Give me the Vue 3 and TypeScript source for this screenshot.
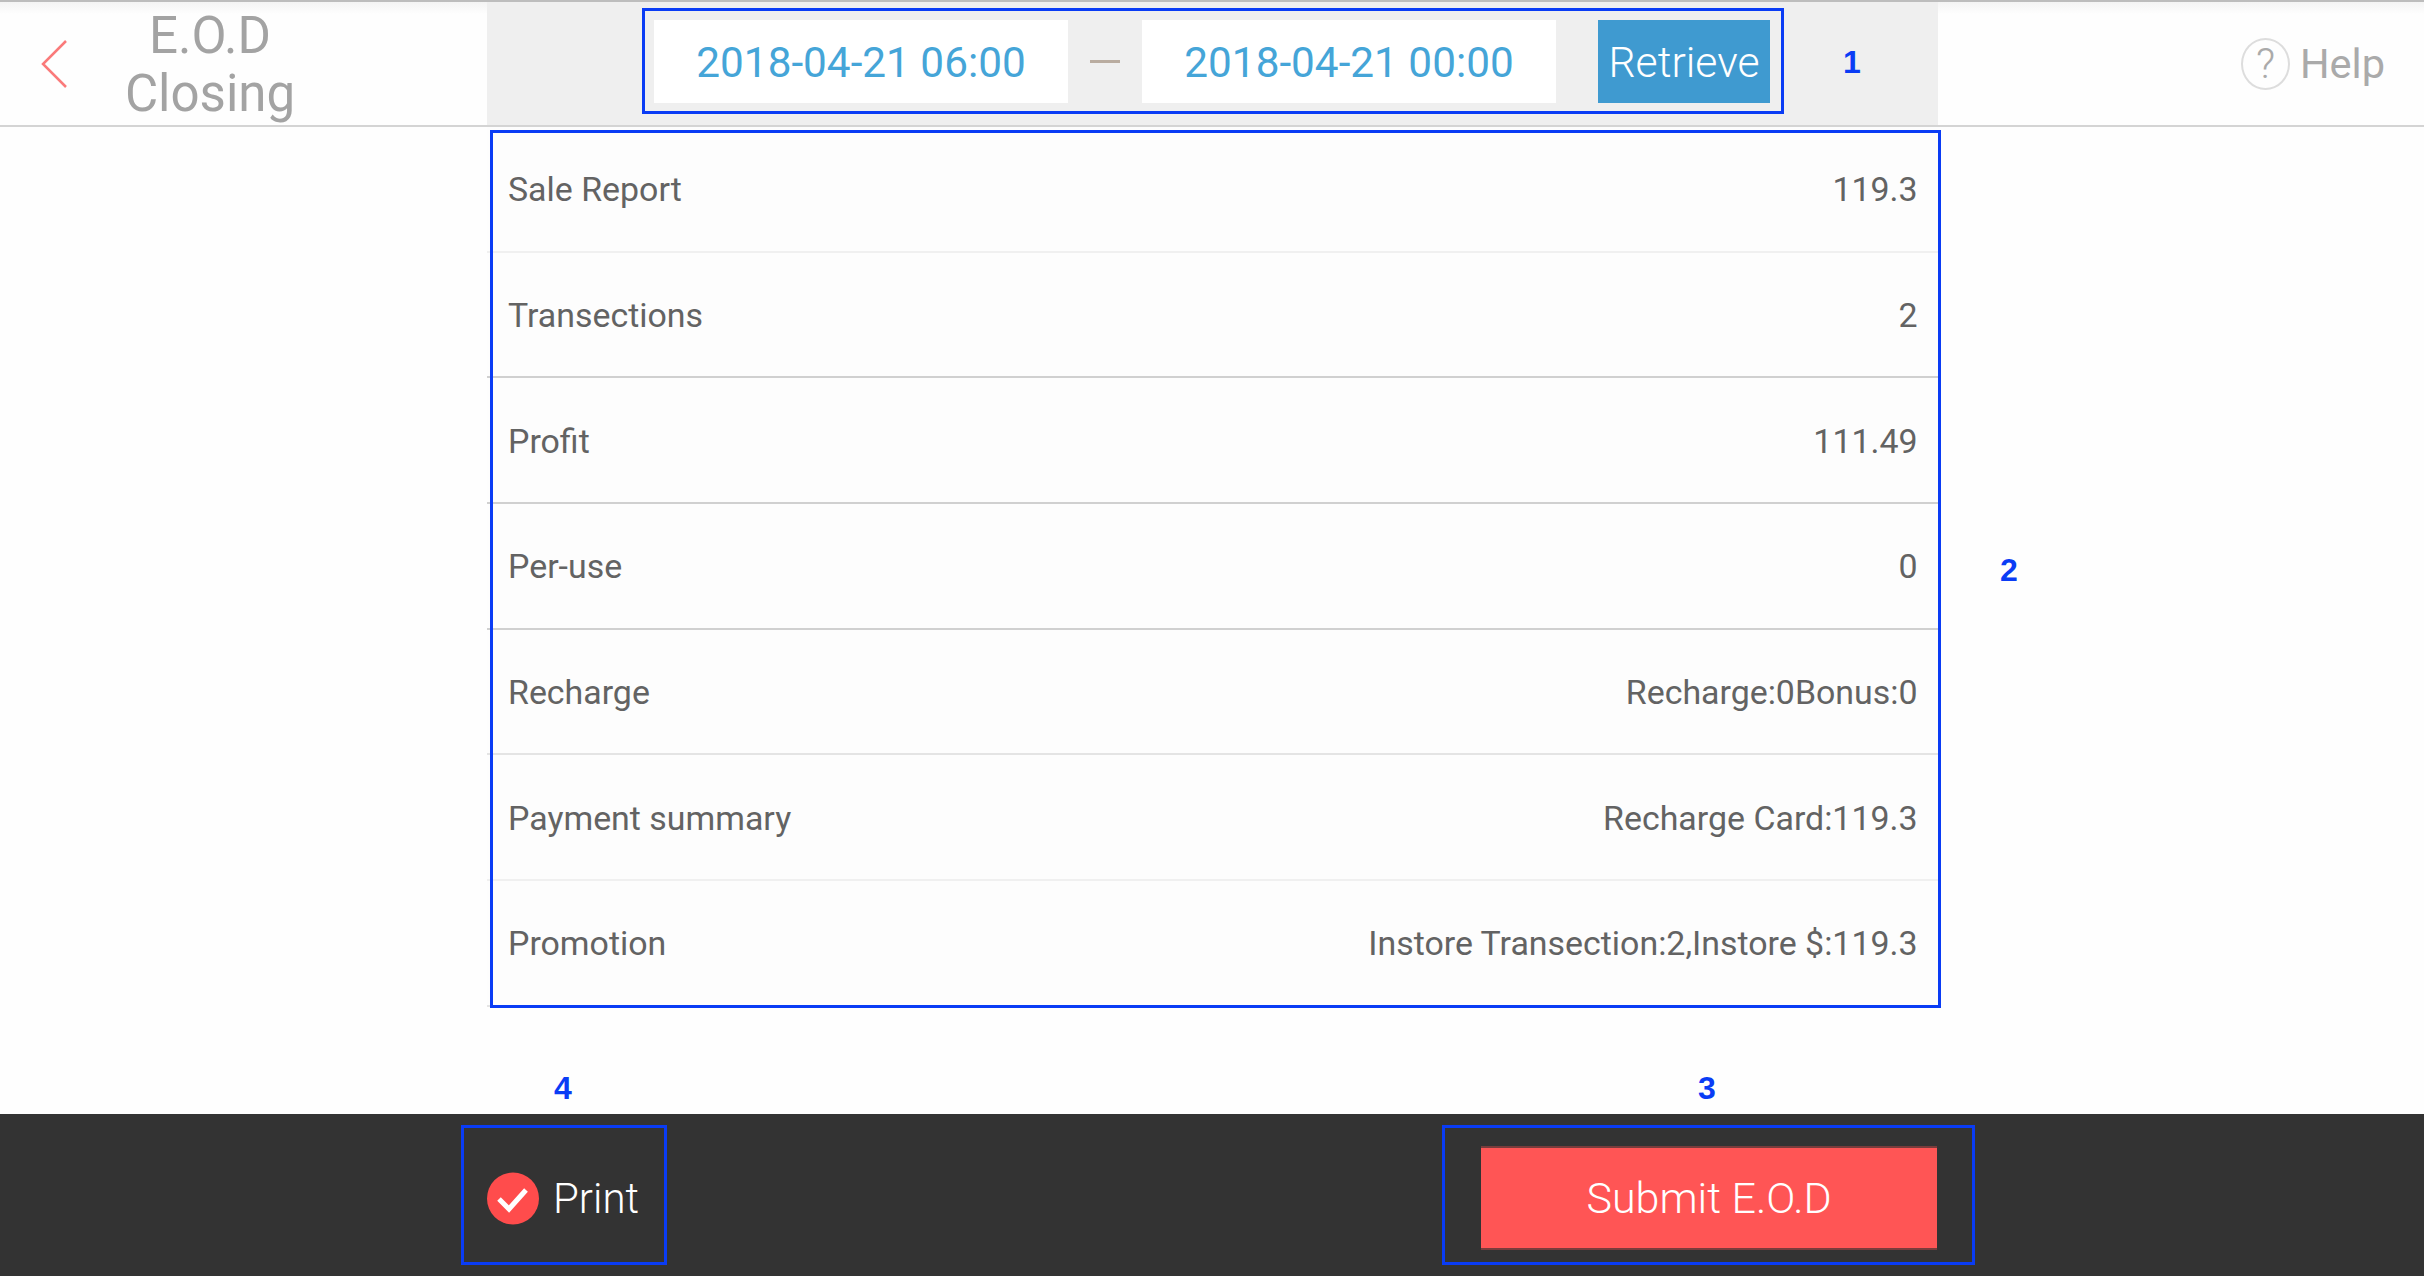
<script setup lang="ts">
interface Row { label: string; value: string }
const rows: Row[] = [
  { label: 'Sale Report', value: '119.3' },
  { label: 'Transections', value: '2' },
  { label: 'Profit', value: '111.49' },
  { label: 'Per-use', value: '0' },
  { label: 'Recharge', value: 'Recharge:0Bonus:0' },
  { label: 'Payment summary', value: 'Recharge Card:119.3' },
  { label: 'Promotion', value: 'Instore Transection:2,Instore $:119.3' },
]
</script>

<template>
  <div class="page">
    <header class="header">
      <div class="head-left">
        <svg class="back" width="30" height="50" viewBox="0 0 30 50">
          <path d="M26 2 L3 25 L26 48" fill="none" stroke="#fa7a7a" stroke-width="2.5" />
        </svg>
        <h1 class="title">E.O.D<br />Closing</h1>
      </div>
      <div class="head-mid">
        <div class="date">2018-04-21 06:00</div>
        <div class="dash"></div>
        <div class="date">2018-04-21 00:00</div>
        <button class="retrieve">Retrieve</button>
      </div>
      <div class="head-right">
        <span class="help-icon">?</span>
        <span class="help-text">Help</span>
      </div>
    </header>

    <main class="content">
      <div v-for="r in rows" :key="r.label" class="row">
        <span>{{ r.label }}</span>
        <span class="val">{{ r.value }}</span>
      </div>
    </main>

    <footer class="footer">
      <div class="print">
        <svg width="52" height="53" viewBox="0 0 52 53">
          <circle cx="26" cy="26.5" r="26" fill="#ff4c4c" />
          <path d="M12 27 L22 37 L39 18" fill="none" stroke="#fff" stroke-width="5" />
        </svg>
        <span>Print</span>
      </div>
      <button class="submit">Submit E.O.D</button>
    </footer>

    <div class="mark m1"></div>
    <div class="mark m2"></div>
    <div class="mark m3"></div>
    <div class="mark m4"></div>
    <span class="num n1">1</span>
    <span class="num n2">2</span>
    <span class="num n3">3</span>
    <span class="num n4">4</span>
  </div>
</template>

<style>
html, body { margin: 0; background: #fefefe; }
</style>

<style scoped>
.page {
  position: relative;
  width: 2424px;
  height: 1276px;
  overflow: hidden;
  display: flex;
  flex-direction: column;
  font-family: Roboto, "Liberation Sans", sans-serif;
  background: #fefefe;
}
.header {
  flex: none;
  display: flex;
  border-bottom: 2px solid #d4d4d4;
  border-top: 3px solid #bdbdbd;
  margin-top: -1px;
  height: 123px;
  background: linear-gradient(#f4f4f4, #fefefe 12px);
}
.head-left {
  width: 487px;
  flex: none;
  display: flex;
  align-items: center;
}
.back { margin-left: 40px; flex: none; }
.title {
  margin: 3px 0 0 35px;
  width: 210px;
  text-align: center;
  font-size: 51px;
  line-height: 58px;
  font-weight: 400;
  color: #a3a3a3;
}
.head-mid {
  width: 1451px;
  flex: none;
  background: #efefef;
  display: flex;
  align-items: center;
  padding: 0 0 4px 167px;
  box-sizing: border-box;
}
.date {
  width: 414px;
  height: 83px;
  padding-top: 2px;
  box-sizing: border-box;
  background: #fff;
  color: #45a5d8;
  font-size: 42.3px;
  display: flex;
  align-items: center;
  justify-content: center;
}
.dash {
  width: 30px;
  height: 3px;
  margin: 0 22px;
  background: #b9aca0;
}
.retrieve {
  margin-left: 42px;
  width: 172px;
  height: 83px;
  border: none;
  padding: 1px 0 0;
  background: #3f9ad0;
  color: #fff;
  font-family: inherit;
  font-size: 42.7px;
  font-weight: 300;
}
.head-right {
  flex: 1;
  display: flex;
  align-items: center;
  padding-left: 303px;
  color: #aaa;
}
.help-icon {
  width: 45px;
  height: 48px;
  border: 2px solid #ddd;
  border-radius: 50%;
  display: flex;
  align-items: center;
  justify-content: center;
  font-size: 42px;
  font-weight: 300;
  flex: none;
}
.help-text { margin-left: 10px; font-size: 41.5px; font-weight: 400; }
.content {
  flex: none;
  margin-left: 487px;
  width: 1453px;
  background: #fdfdfd;
  align-self: flex-start;
}
.row {
  height: 125.7px;
  box-sizing: border-box;
  padding: 2px 22.5px 0 21px;
  display: flex;
  align-items: center;
  justify-content: space-between;
  font-size: 33.9px;
  color: #636363;
  border-bottom: 2px solid #e4e4e4;
}
.row:nth-child(2), .row:nth-child(3), .row:nth-child(4) { border-bottom-color: #d0d0d0; }
.row:nth-child(1), .row:nth-child(6) { border-bottom-color: #f0f0f0; }
.footer {
  height: 162px;
  margin-top: auto;
  flex: none;
  background: #333;
  display: flex;
  align-items: center;
  padding: 6px 0 0 487px;
  box-sizing: border-box;
}
.print {
  display: flex;
  align-items: center;
  gap: 14px;
  color: #fff;
  font-size: 42px;
  font-weight: 300;
}
.submit {
  margin-left: 842px;
  width: 456px;
  height: 100px;
  border: none;
  padding: 0;
  background: #ff5555;
  box-shadow: 0 2px 0 #793c3c, 0 -2px 0 #793c3c;
  color: #fff;
  font-family: inherit;
  font-size: 43px;
  font-weight: 300;
}
.mark {
  position: absolute;
  box-sizing: border-box;
  border: 3px solid #0a3cf5;
}
.m1 { left: 642px; top: 8px; width: 1142px; height: 106px; }
.m2 { left: 490px; top: 130px; width: 1451px; height: 878px; }
.m3 { left: 1442px; top: 1125px; width: 533px; height: 140px; }
.m4 { left: 461px; top: 1125px; width: 206px; height: 140px; }
.num {
  position: absolute;
  color: #0a3cf5;
  font-family: "Liberation Sans", sans-serif;
  font-size: 32px;
  font-weight: 700;
  line-height: 38px;
  width: 40px;
  text-align: center;
}
.n1 { left: 1832px; top: 43px; }
.n2 { left: 1989px; top: 551px; }
.n3 { left: 1687px; top: 1069px; }
.n4 { left: 543px; top: 1069px; }
</style>
